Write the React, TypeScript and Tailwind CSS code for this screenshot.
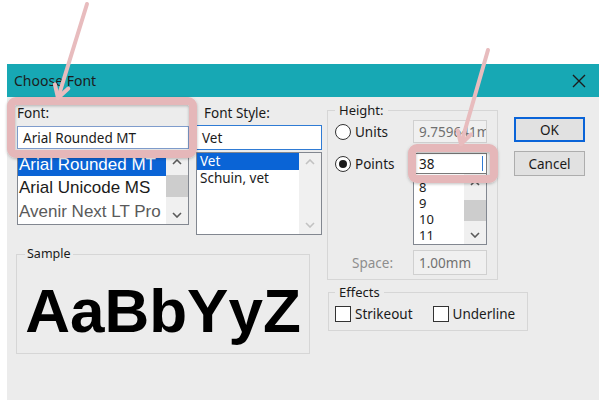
import React from "react";

const ui = { fontFamily: '"Noto Sans", "Open Sans", sans-serif' };
const arial = { fontFamily: '"Liberation Sans", Arial, sans-serif' };

function Chevron({ up, disabled }: { up?: boolean; disabled?: boolean }) {
  return (
    <svg width="10" height="6" viewBox="0 0 10 6">
      <polyline
        points={up ? "1,5 5,1 9,5" : "1,1 5,5 9,1"}
        fill="none"
        stroke={disabled ? "#c2c2c2" : "#5a5a5a"}
        strokeWidth="1.6"
      />
    </svg>
  );
}

function ScrollBar({ thumbTop, thumbH, disabled }: { thumbTop?: number; thumbH?: number; disabled?: boolean }) {
  return (
    <div className="w-[22px] bg-[#f0f0f0] flex flex-col items-center justify-between py-[6px] relative">
      <Chevron up disabled={disabled} />
      {!disabled && (
        <div
          className="absolute left-0 right-0 bg-[#cdcdcd]"
          style={{ top: thumbTop, height: thumbH }}
        />
      )}
      <Chevron disabled={disabled} />
    </div>
  );
}

function Radio({ checked }: { checked?: boolean }) {
  return (
    <div className="w-[16px] h-[16px] rounded-full border border-[#333] bg-white flex items-center justify-center">
      {checked && <div className="w-[8px] h-[8px] rounded-full bg-[#1a1a1a]" />}
    </div>
  );
}

function Check({ label }: { label: string }) {
  return (
    <div className="flex items-center gap-[4px]">
      <div className="w-[16px] h-[16px] border border-[#333] bg-white" />
      <span>{label}</span>
    </div>
  );
}

export default function App() {
  return (
    <div className="relative w-[603px] h-[406px] bg-white overflow-hidden text-[#1a1a1a]" style={ui}>
      <div className="ml-[7px] mt-[64px] w-[592px] h-[336px] bg-[#ececec] flex flex-col">
        {/* title bar */}
        <div className="h-[33px] bg-[#17a8b4] flex items-center justify-between pl-[7px] pr-[13px]">
          <span className="text-[14px] text-[#1c1c1c]">Choose Font</span>
          <svg width="14" height="14" viewBox="0 0 14 14">
            <path d="M1 1 L13 13 M13 1 L1 13" stroke="#1c1c1c" strokeWidth="1.4" />
          </svg>
        </div>

        <div className="flex items-start pl-[9px] text-[13.5px] leading-[16px]">
          {/* left block */}
          <div className="w-[306px] flex flex-col">
            <div className="flex gap-[7px] pl-[1px]">
              <div className="w-[172px] flex flex-col pt-[8px]">
                <span>Font:</span>
                <div className="mt-[5px] h-[23px] border border-[#7f9ccc] bg-white flex items-center pl-[5px]">
                  Arial Rounded MT
                </div>
                <div className="mt-[3px] h-[73px] border border-[#828790] bg-white flex">
                  <div className="flex-1 overflow-hidden text-[17px] leading-[23px] whitespace-nowrap" style={arial}>
                    <div className="bg-[#0a64d6] text-white pl-[1px] h-[23px]">Arial Rounded MT</div>
                    <div className="pl-[1px] h-[24px] leading-[24px]">Arial Unicode MS</div>
                    <div className="pl-[1px] h-[24px] leading-[24px] text-[#5a5a5a]">Avenir Next LT Pro</div>
                  </div>
                  <ScrollBar thumbTop={22} thumbH={22} />
                </div>
              </div>

              <div className="w-[126px] flex flex-col pt-[8px]">
                <span className="pl-[8px]">Font Style:</span>
                <div className="mt-[4px] h-[25px] border border-[#2f7bd4] bg-white flex items-center pl-[5px]">
                  Vet
                </div>
                <div className="mt-[2px] h-[83px] border border-[#828790] bg-white flex">
                  <div className="flex-1 whitespace-nowrap">
                    <div className="bg-[#0a64d6] text-white pl-[3px] h-[17px] leading-[17px]">Vet</div>
                    <div className="pl-[3px] h-[17px] leading-[17px]">Schuin, vet</div>
                  </div>
                  <ScrollBar disabled />
                </div>
              </div>
            </div>

            <fieldset className="mt-[12px] w-[294px] h-[107px] border border-[#d6d6d6] px-[8px] flex flex-col">
              <legend className="px-[2px] text-[12.5px] leading-[14px]">Sample</legend>
              <div
                className="mt-[19px] text-center text-[62px] leading-[62px] font-bold text-black"
                style={arial}
              >
                AaBbYyZ
              </div>
            </fieldset>
          </div>

          {/* middle block */}
          <div className="ml-[5px] w-[171px] shrink-0 flex flex-col">
            <fieldset className="mt-[6px] w-[171px] border border-[#d6d6d6] pl-[7px] pr-[10px] pb-[4px]">
              <legend className="px-[4px] text-[13px] leading-[14px]">Height:</legend>
              <div className="mt-[3px] h-[23px] flex items-center justify-between">
                <div className="flex items-center gap-[4px]">
                  <Radio />
                  <span>Units</span>
                </div>
                <div className="w-[74px] h-[23px] border border-[#d0d0d0] bg-[#f0f0f0] text-[#707070] flex items-center pl-[5px] overflow-hidden whitespace-nowrap">
                  9.759641mm
                </div>
              </div>
              <div className="mt-[10px] flex items-start justify-between">
                <div className="h-[21px] flex items-center gap-[4px]">
                  <Radio checked />
                  <span>Points</span>
                </div>
                <div className="w-[74px] flex flex-col">
                  <div className="h-[21px] border border-[#7a7a7a] bg-white flex items-center justify-between pl-[5px] pr-[3px]">
                    <span>38</span>
                    <div className="w-[1px] h-[15px] bg-[#2f7bd4]" />
                  </div>
                  <div className="h-[71px] border border-t-0 border-[#828790] bg-white flex">
                    <div className="flex-1 pt-[5px] pl-[5px] text-[13px] leading-[16px]">
                      <div className="h-[16px]">8</div>
                      <div className="h-[16px]">9</div>
                      <div className="h-[16px]">10</div>
                      <div className="h-[16px]">11</div>
                    </div>
                    <ScrollBar thumbTop={26} thumbH={21} />
                  </div>
                </div>
              </div>
              <div className="mt-[5px] h-[25px] flex items-center justify-between">
                <span className="pl-[17px] text-[#8e8e8e]">Space:</span>
                <div className="w-[74px] h-[25px] border border-[#d0d0d0] bg-[#f0f0f0] text-[#707070] flex items-center pl-[5px]">
                  1.00mm
                </div>
              </div>
            </fieldset>

            <fieldset className="mt-[5px] ml-[1px] w-[200px] max-w-none border border-[#d6d6d6] pl-[6px] pb-[8px]">
              <legend className="px-[4px] text-[13px] leading-[14px]">Effects</legend>
              <div className="mt-[7px] flex items-center gap-[20px]">
                <Check label="Strikeout" />
                <Check label="Underline" />
              </div>
            </fieldset>
          </div>

          {/* buttons */}
          <div className="ml-[16px] mt-[20px] flex flex-col gap-[9px]">
            <button className="w-[71px] h-[25px] border-2 border-[#0a64d8] bg-[#e1e1e1] flex items-center justify-center">
              OK
            </button>
            <button className="w-[71px] h-[25px] border border-[#adadad] bg-[#e1e1e1] flex items-center justify-center">
              Cancel
            </button>
          </div>
        </div>
      </div>

      {/* annotation overlay */}
      <svg className="absolute inset-0 pointer-events-none" width="603" height="406" viewBox="0 0 603 406">
        <defs>
          <filter id="sh" x="-10%" y="-20%" width="120%" height="140%">
            <feDropShadow dx="0" dy="1" stdDeviation="1.5" floodColor="#000" floodOpacity="0.25" />
          </filter>
        </defs>
        <g filter="url(#sh)" fill="none" stroke="#e5b7b9" strokeWidth="8">
          <rect x="11" y="101" width="182" height="53" rx="5" />
          <rect x="412" y="148" width="82" height="31" rx="5" />
        </g>
        <g fill="none" stroke="#e8bcbe" strokeWidth="4" strokeLinecap="round" strokeLinejoin="round">
          <line x1="87" y1="4" x2="58" y2="98" />
          <polyline points="68.3,88.5 58,98 54.9,84.4" />
          <line x1="488" y1="50" x2="461" y2="144" />
          <polyline points="471.1,134.3 461,144 457.6,130.4" />
        </g>
      </svg>
    </div>
  );
}
